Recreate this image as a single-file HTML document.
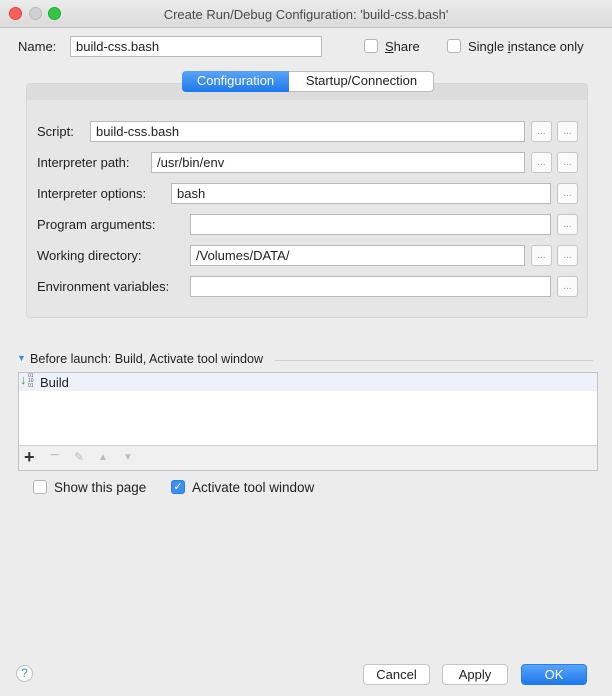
<!DOCTYPE html>
<html><head><style>
*{box-sizing:border-box}
body{margin:0;width:612px;height:696px;overflow:hidden;background:#ececec;font-family:"Liberation Sans",sans-serif;font-size:13px;color:#222;position:relative}
.a{position:absolute}
.f{position:absolute;background:#fff;border:1px solid #b9b9b9;height:21px;padding:2px 5px;font-size:13px;line-height:15px}
.b{position:absolute;width:21px;height:21px;background:#fafafa;border:1px solid #c6c6c6;border-radius:3px;color:#999;font-size:10px;text-align:center;line-height:20px}
.cb{position:absolute;width:14px;height:14px;background:#fff;border:1px solid #b4b4b4;border-radius:3px}
.btn{position:absolute;height:21px;background:#fff;border:1px solid #c4c4c4;border-radius:4px;text-align:center;line-height:19px;font-size:13px}
</style></head><body>
<div class="a" style="left:0;top:0;width:612px;height:28px;background:linear-gradient(#ececec,#dadada);border-bottom:1px solid #c4c4c4"></div>
<div class="a" style="left:9px;top:7px;width:13px;height:13px;border-radius:50%;background:#fc5f57;border:1px solid #e0443e"></div>
<div class="a" style="left:29px;top:7px;width:13px;height:13px;border-radius:50%;background:#d0d0d0;border:1px solid #bbb"></div>
<div class="a" style="left:48px;top:7px;width:13px;height:13px;border-radius:50%;background:#33c748;border:1px solid #27aa35"></div>
<div class="a" style="left:0;top:7px;width:612px;text-align:center;color:#4a4a4a">Create Run/Debug Configuration: 'build-css.bash'</div>
<div class="a" style="left:18px;top:39px">Name:</div>
<div class="f" style="left:70px;top:36px;width:252px">build-css.bash</div>
<div class="cb" style="left:364px;top:39px"></div><div class="a" style="left:385px;top:39px"><u>S</u>hare</div>
<div class="cb" style="left:447px;top:39px"></div><div class="a" style="left:468px;top:39px">Single <u>i</u>nstance only</div>
<div class="a" style="left:26px;top:83px;width:562px;height:235px;border:1px solid #d6d6d6;border-radius:4px;background:#e6e6e6"></div>
<div class="a" style="left:27px;top:84px;width:560px;height:16px;background:#dcdcdc;border-radius:4px 4px 0 0"></div>
<div class="a" style="left:182px;top:71px;width:252px;height:21px;border:1px solid #bdbdbd;border-radius:4px;background:#fff"></div>
<div class="a" style="left:182px;top:71px;width:107px;height:21px;border-radius:4px 0 0 4px;background:linear-gradient(#5aa4f7,#1c78ef);color:#fff;text-align:center;line-height:20px">Configuration</div>
<div class="a" style="left:289px;top:71px;width:145px;height:21px;text-align:center;line-height:20px">Startup/Connection</div>
<div class="a" style="left:37px;top:124px">Script:</div><div class="f" style="left:90px;top:121px;width:435px">build-css.bash</div>
<div class="b" style="left:531px;top:121px">...</div><div class="b" style="left:557px;top:121px">...</div>
<div class="a" style="left:37px;top:155px">Interpreter path:</div><div class="f" style="left:151px;top:152px;width:374px">/usr/bin/env</div>
<div class="b" style="left:531px;top:152px">...</div><div class="b" style="left:557px;top:152px">...</div>
<div class="a" style="left:37px;top:186px">Interpreter options:</div><div class="f" style="left:171px;top:183px;width:380px">bash</div>
<div class="b" style="left:557px;top:183px">...</div>
<div class="a" style="left:37px;top:217px">Program arguments:</div><div class="f" style="left:190px;top:214px;width:361px"></div>
<div class="b" style="left:557px;top:214px">...</div>
<div class="a" style="left:37px;top:248px">Working directory:</div><div class="f" style="left:190px;top:245px;width:335px">/Volumes/DATA/</div>
<div class="b" style="left:531px;top:245px">...</div><div class="b" style="left:557px;top:245px">...</div>
<div class="a" style="left:37px;top:279px">Environment variables:</div><div class="f" style="left:190px;top:276px;width:361px"></div>
<div class="b" style="left:557px;top:276px">...</div>
<div class="a" style="left:17px;top:353px;color:#3a8fc9;font-size:9px">▼</div>
<div class="a" style="left:30px;top:352px;font-size:12.6px">Before launch: Build, Activate tool window</div>
<div class="a" style="left:275px;top:360px;width:318px;height:1px;background:#cfcfcf"></div>
<div class="a" style="left:18px;top:372px;width:580px;height:99px;border:1px solid #c2c2c2;background:#fff"></div>
<div class="a" style="left:19px;top:373px;width:578px;height:18px;background:#edf2fa"></div>
<div class="a" style="left:20px;top:372px;color:#3b9a3b;font-size:13px;font-weight:bold">↓</div>
<div class="a" style="left:28px;top:374px;font-size:5px;line-height:5px;color:#555">01<br>10<br>01</div>
<div class="a" style="left:40px;top:375px">Build</div>
<div class="a" style="left:19px;top:445px;width:578px;height:25px;background:#f0f0f0;border-top:1px solid #d0d0d0"></div>
<div class="a" style="left:24px;top:447px;font-size:18px;color:#333;font-weight:bold">+</div>
<div class="a" style="left:50px;top:447px;font-size:16px;color:#bbb">−</div>
<div class="a" style="left:74px;top:450px;font-size:12px;color:#bbb">✎</div>
<div class="a" style="left:98px;top:452px;font-size:10px;color:#bbb">▲</div>
<div class="a" style="left:123px;top:452px;font-size:10px;color:#bbb">▼</div>
<div class="cb" style="left:33px;top:480px"></div><div class="a" style="left:54px;top:480px;font-size:13.5px">Show this page</div>
<div class="cb" style="left:171px;top:480px;background:#3b8ff0;border-color:#2c7de0;color:#fff;font-size:11px;line-height:12px;text-align:center">✓</div>
<div class="a" style="left:192px;top:480px;font-size:13.5px">Activate tool window</div>
<div class="a" style="left:16px;top:665px;width:17px;height:17px;border-radius:50%;border:1px solid #c0c0c0;background:#fff;color:#3a8fc9;text-align:center;font-size:12px;line-height:15px">?</div>
<div class="btn" style="left:363px;top:664px;width:67px">Cancel</div>
<div class="btn" style="left:442px;top:664px;width:66px">Apply</div>
<div class="btn" style="left:521px;top:664px;width:66px;background:linear-gradient(#5aa4f7,#1c78ef);border-color:#2a7de8;color:#fff">OK</div>
</body></html>
